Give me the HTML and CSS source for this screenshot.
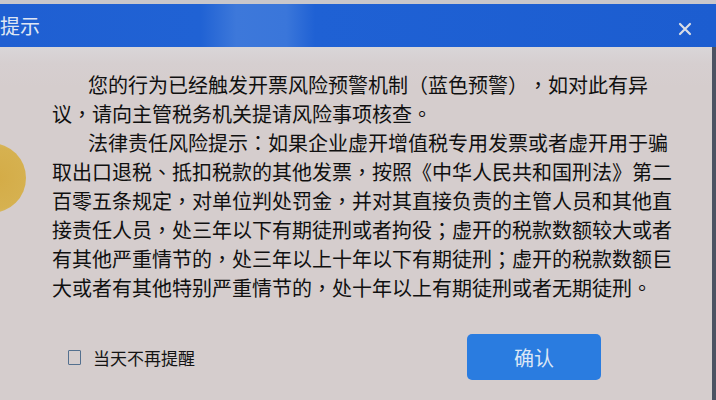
FILE: index.html
```html
<!DOCTYPE html>
<html lang="zh-CN">
<head>
<meta charset="utf-8">
<title>提示</title>
<link rel="stylesheet" href="styles.css">
</head>
<body>
<div class="dialog">
  <div class="top-strip"></div>
  <div class="titlebar">
    <span class="title">提示</span>
    <span class="close">
      <svg width="14" height="14" viewBox="0 0 14 14"><path d="M2 2 L12 12 M12 2 L2 12" stroke="#d9dde6" stroke-width="2.2" stroke-linecap="round"/></svg>
    </span>
  </div>
  <div class="content">
    <p class="para">您的行为已经触发开票风险预警机制<span class="pn" lang="zh-TW">（</span>蓝色预警<span class="pn" lang="zh-TW">），</span>如对此有异议<span class="pn" lang="zh-TW">，</span>请向主管税务机关提请风险事项核查<span class="pn" lang="zh-TW">。</span></p>
    <p class="para">法律责任风险提示<span class="pn" lang="zh-TW">：</span>如果企业虚开增值税专用发票或者虚开用于骗取出口退税<span class="pn" lang="zh-TW">、</span>抵扣税款的其他发票<span class="pn" lang="zh-TW">，</span>按照《中华人民共和国刑法》第二百零五条规定<span class="pn" lang="zh-TW">，</span>对单位判处罚金<span class="pn" lang="zh-TW">，</span>并对其直接负责的主管人员和其他直接责任人员<span class="pn" lang="zh-TW">，</span>处三年以下有期徒刑或者拘役<span class="pn" lang="zh-TW">；</span>虚开的税款数额较大或者有其他严重情节的<span class="pn" lang="zh-TW">，</span>处三年以上十年以下有期徒刑<span class="pn" lang="zh-TW">；</span>虚开的税款数额巨大或者有其他特别严重情节的<span class="pn" lang="zh-TW">，</span>处十年以上有期徒刑或者无期徒刑<span class="pn" lang="zh-TW">。</span></p>
    <div class="footer">
      <label class="check"><span class="box"></span><span class="check-label">当天不再提醒</span></label>
      <button class="ok">确认</button>
    </div>
  </div>
  <div class="blob"></div>
</div>
</body>
</html>
```
FILE: styles.css
```css
html, body {
  margin: 0;
  padding: 0;
  width: 716px;
  height: 400px;
  overflow: hidden;
  background: #d5cdcd;
}
.dialog {
  position: relative;
  width: 716px;
  height: 400px;
  display: flex;
  flex-direction: column;
  font-family: "Noto Sans CJK SC", "Noto Sans", sans-serif;
  overflow: hidden;
}
.top-strip {
  height: 4px;
  background: #c9c7cb;
}
.titlebar {
  height: 43px;
  display: flex;
  align-items: center;
  justify-content: space-between;
  background: linear-gradient(90deg, #1f5fd2 0%, #2062d4 28%, #3d78da 33%, #3a76da 40%, #1f61d4 44%, #1c5dd0 100%);
}
.title {
  margin-left: 0;
  font-size: 20px;
  color: #dfe6f4;
  line-height: 1;
}
.close {
  display: flex;
  margin-right: 24px;
  margin-top: 6px;
}
.content {
  flex: 1;
  display: flex;
  flex-direction: column;
  padding: 23px 36px 0 52px;
  border-right: 4px solid #4c5262;
  background: linear-gradient(180deg, #d9d6d8 0px, #d6cfd0 16px, #d5cdcd 40px);
}
.para {
  margin: 0;
  font-size: 20px;
  line-height: 29px;
  text-indent: 36px;
  color: #101010;
  text-spacing-trim: space-all;
  line-break: strict;
}
.pn {
  font-family: "Noto Sans CJK TC", "Noto Sans CJK SC", sans-serif;
  line-height: 29px;
}
.footer {
  display: flex;
  align-items: center;
  margin-top: 32px;
  padding-left: 16px;
  height: 46px;
}
.check {
  display: flex;
  align-items: center;
  gap: 12px;
}
.box {
  width: 11px;
  height: 13px;
  border: 1.5px solid #54708f;
  border-radius: 1px;
}
.check-label {
  font-size: 17px;
  color: #141414;
}
.ok {
  margin-left: auto;
  margin-right: 75px;
  width: 134px;
  height: 46px;
  border: none;
  border-radius: 5px;
  background: #2a7ce0;
  color: #dbe6f6;
  font-family: "Noto Sans CJK SC", "Noto Sans", sans-serif;
  font-size: 20px;
}
.blob {
  position: absolute;
  left: -44px;
  top: 143px;
  width: 70px;
  height: 70px;
  border-radius: 50%;
  background: radial-gradient(circle at 60% 50%, #d4a838 0%, #d6ae42 55%, #dcc070 80%, #d8c8a8 100%);
  opacity: 0.9;
}
```
